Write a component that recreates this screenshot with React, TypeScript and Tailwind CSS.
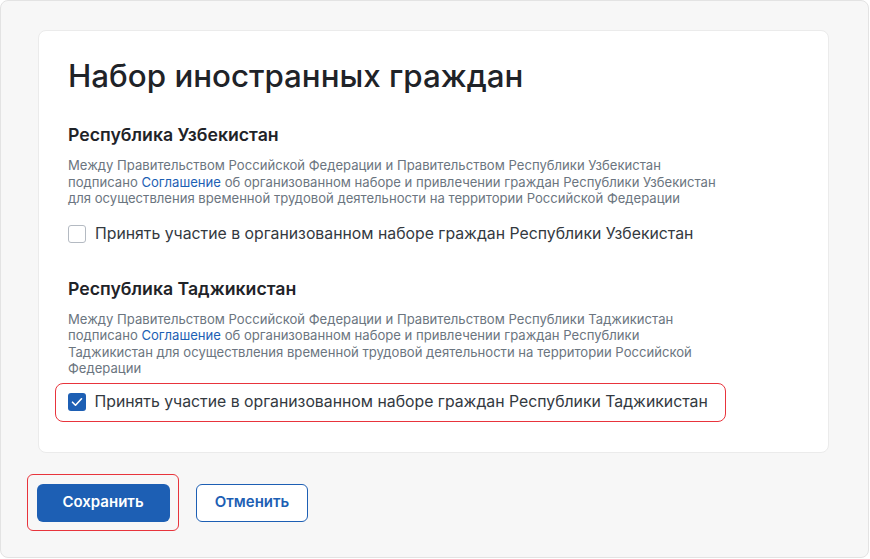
import React from 'react';

const font = { fontFamily: 'Inter, "Noto Sans", sans-serif' };

const Checkbox: React.FC<{ checked?: boolean }> = ({ checked }) =>
  checked ? (
    <div className="w-[18px] h-[18px] rounded-[3px] bg-[#1d5fb4] flex items-center justify-center shrink-0">
      <svg width="12" height="10" viewBox="0 0 12 10" fill="none">
        <path d="M1.5 5.2 4.5 8.2 10.5 1.8" stroke="white" strokeWidth="1.6" strokeLinecap="round" strokeLinejoin="round" />
      </svg>
    </div>
  ) : (
    <div className="w-[18px] h-[18px] rounded-[3px] border-[1.5px] border-[#b4bac2] bg-white shrink-0" />
  );

const Section: React.FC<{
  title: string;
  lines: React.ReactNode;
  label: string;
  checked?: boolean;
}> = ({ title, lines, label, checked }) => (
  <div className="flex flex-col">
    <h2 className="text-[17.7px] leading-[24px] font-semibold text-[#1f2328]">{title}</h2>
    <p className="mt-[10px] text-[13.1px] leading-[16.5px] text-[#6b7580] whitespace-nowrap">{lines}</p>
    {checked ? (
      <div className="mt-[6px] -ml-[13px] w-[671px] h-[39px] border-[1.5px] border-[#e8343c] rounded-[8px] flex items-center pl-[11.5px]">
        <Checkbox checked />
        <span className="ml-[9px] text-[15.8px] text-[#33393f] whitespace-nowrap">{label}</span>
      </div>
    ) : (
      <div className="mt-[15px] h-[24px] flex items-center">
        <Checkbox />
        <span className="ml-[9px] text-[15.8px] text-[#33393f] whitespace-nowrap">{label}</span>
      </div>
    )}
  </div>
);

const Link = () => <span className="text-[#1d5fb4]">Соглашение</span>;

export default function App() {
  return (
    <div style={font} className="w-[870px] h-[559px] bg-white">
      <div className="w-[869px] h-[558px] bg-[#f7f7f7] border border-[#e3e3e3] rounded-[8px] pl-[37px] pt-[29px]">
        <div className="w-[791px] h-[423px] bg-white border border-[#ebebeb] rounded-[8px] pl-[29px] pt-[25px]">
          <h1 className="text-[31.3px] leading-[40px] font-medium text-[#1f2328]">Набор иностранных граждан</h1>
          <div className="mt-[27px]">
            <Section
              title="Республика Узбекистан"
              lines={
                <>
                  Между Правительством Российской Федерации и Правительством Республики Узбекистан<br />
                  подписано <Link /> об организованном наборе и привлечении граждан Республики Узбекистан<br />
                  для осуществления временной трудовой деятельности на территории Российской Федерации
                </>
              }
              label="Принять участие в организованном наборе граждан Республики Узбекистан"
            />
          </div>
          <div className="mt-[31px]">
            <Section
              title="Республика Таджикистан"
              checked
              lines={
                <>
                  Между Правительством Российской Федерации и Правительством Республики Таджикистан<br />
                  подписано <Link /> об организованном наборе и привлечении граждан Республики<br />
                  Таджикистан для осуществления временной трудовой деятельности на территории Российской<br />
                  Федерации
                </>
              }
              label="Принять участие в организованном наборе граждан Республики Таджикистан"
            />
          </div>
        </div>
        <div className="mt-[21px] -ml-[11px] flex items-center">
          <div className="border-[1.5px] border-[#e8343c] rounded-[6px] p-[8.5px]">
            <button className="w-[133px] h-[38px] rounded-[6px] bg-[#1d5fb4] text-white text-[15px] font-semibold">
              Сохранить
            </button>
          </div>
          <button className="ml-[17px] w-[112px] h-[38px] rounded-[6px] border border-[#1d5fb4] bg-white text-[#1d5fb4] text-[15px] font-semibold">
            Отменить
          </button>
        </div>
      </div>
    </div>
  );
}
